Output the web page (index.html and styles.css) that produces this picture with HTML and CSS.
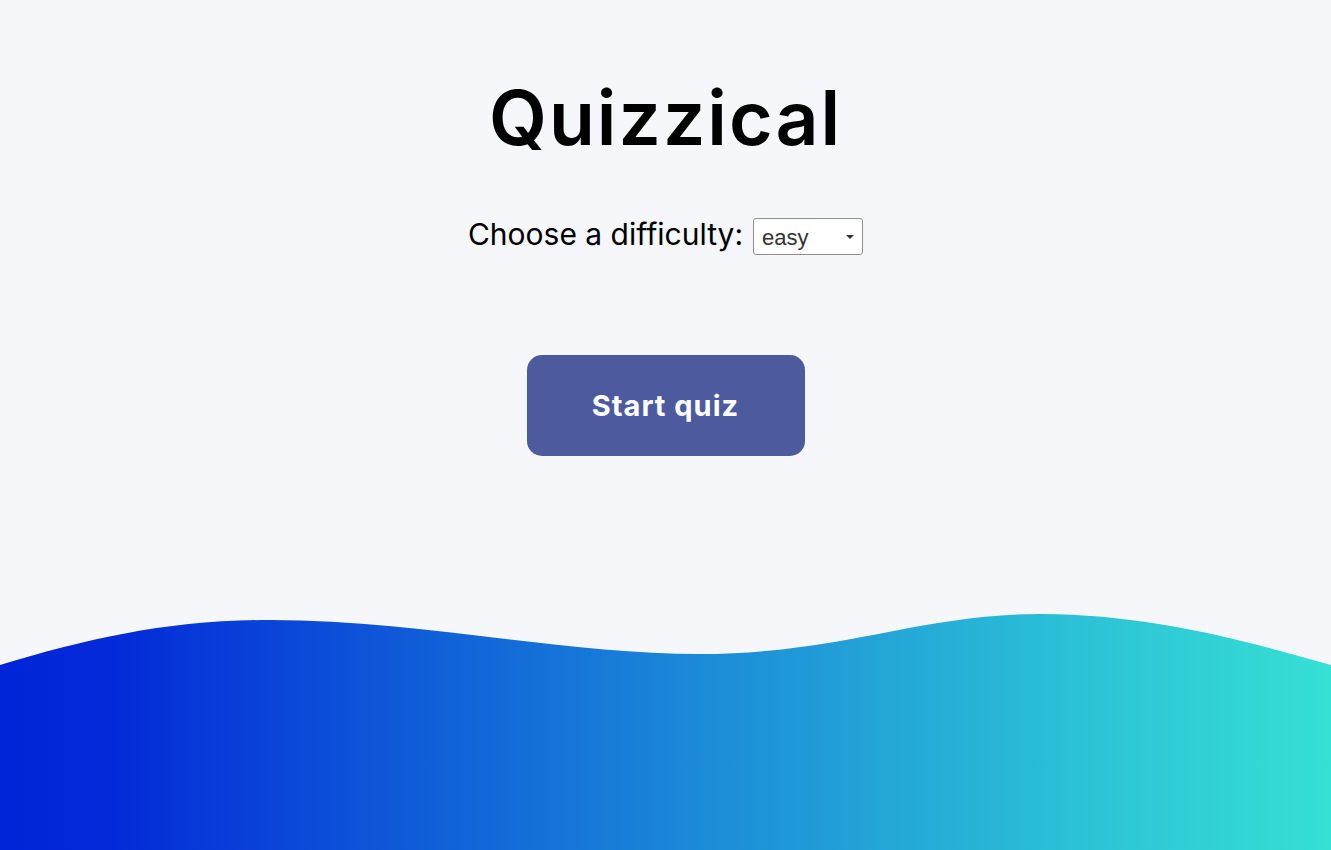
FILE: index.html
```html
<!DOCTYPE html>
<html lang="en">
<head>
<meta charset="utf-8">
<title>Quizzical</title>
<link rel="stylesheet" href="styles.css">
</head>
<body>
<div class="page">
  <main class="intro">
    <h1 class="title">Quizzical</h1>
    <label class="difficulty">Choose a difficulty:
      <span class="select-wrap">
        <select class="difficulty-select">
          <option>easy</option>
          <option>medium</option>
          <option>hard</option>
        </select>
      </span>
    </label>
    <button class="start-btn">Start quiz</button>
  </main>
  <svg class="wave" viewBox="0 0 1331 250" preserveAspectRatio="none" aria-hidden="true">
    <defs>
      <linearGradient id="waveGrad" x1="0" y1="0" x2="1" y2="0">
        <stop offset="0" stop-color="#0024d8"/>
        <stop offset="0.08" stop-color="#0329d8"/>
        <stop offset="0.5" stop-color="#1a85d8"/>
        <stop offset="0.8" stop-color="#2bc0d6"/>
        <stop offset="1" stop-color="#35e0d4"/>
      </linearGradient>
    </defs>
    <path d="M0 65 C 90 38, 170 20, 270 20 C 420 20, 560 54, 700 54 C 840 54, 920 14, 1040 14 C 1150 14, 1250 42, 1331 65 L1331 250 L0 250 Z" fill="url(#waveGrad)"/>
  </svg>
</div>
</body>
</html>
```
FILE: styles.css
```css
html, body {
  margin: 0;
  padding: 0;
  background: #f5f7fb;
}
.page {
  min-height: 100vh;
  display: flex;
  flex-direction: column;
  overflow: hidden;
}
.intro {
  display: flex;
  flex-direction: column;
  align-items: center;
  font-family: "Inter", "Liberation Sans", sans-serif;
  color: #000;
}
.title {
  margin: 73px 0 0;
  font-size: 75px;
  line-height: 90px;
  font-weight: 600;
  letter-spacing: 2px;
}
.difficulty {
  margin-top: 53px;
  font-size: 30px;
  line-height: 37px;
  font-weight: 400;
  display: flex;
  align-items: flex-start;
  gap: 10px;
}
.select-wrap {
  position: relative;
  display: block;
  margin-top: 2px;
}
.select-wrap::after {
  content: "";
  position: absolute;
  right: 9px;
  top: 17px;
  border-left: 4px solid transparent;
  border-right: 4px solid transparent;
  border-top: 4px solid #333;
  pointer-events: none;
}
.difficulty-select {
  display: block;
  width: 110px;
  height: 37px;
  appearance: none;
  -webkit-appearance: none;
  font-family: "Liberation Sans", Arial, sans-serif;
  font-size: 22px;
  color: #333;
  background: #fff;
  border: 1px solid #8f8f8f;
  border-radius: 3px;
  padding: 1px 8px 0;
}
.start-btn {
  margin-top: 100px;
  width: 278px;
  height: 101px;
  border: none;
  border-radius: 15px;
  background: #4d5b9e;
  color: #fff;
  font-family: "Inter", "Liberation Sans", sans-serif;
  font-weight: 700;
  font-size: 29px;
  letter-spacing: 1px;
  cursor: pointer;
}
.wave {
  display: block;
  margin-top: auto;
  width: 100%;
  height: 250px;
}
```
